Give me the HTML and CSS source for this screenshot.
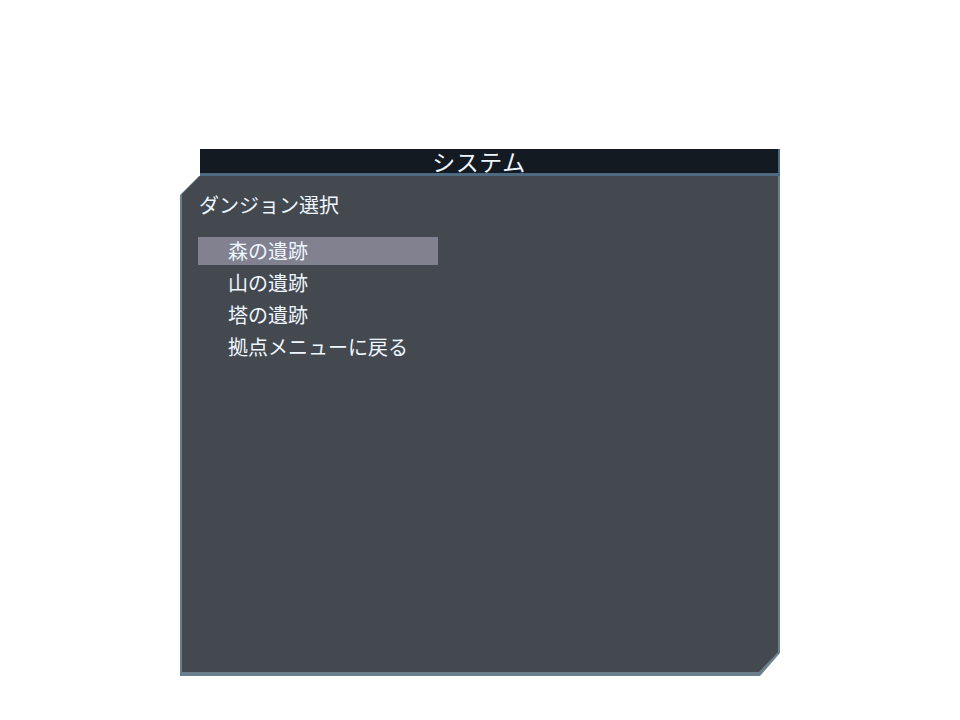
FILE: index.html
```html
<!DOCTYPE html>
<html lang="ja">
<head>
<meta charset="utf-8">
<link rel="stylesheet" href="styles.css">
</head>
<body>
<div class="window">
  <div class="titlebar"><span class="title">システム</span></div>
  <div class="panel-frame">
    <div class="panel">
      <div class="heading">ダンジョン選択</div>
      <ul class="menu">
        <li class="item selected">森の遺跡</li>
        <li class="item">山の遺跡</li>
        <li class="item">塔の遺跡</li>
        <li class="item">拠点メニューに戻る</li>
      </ul>
    </div>
  </div>
</div>
</body>
</html>
```

FILE: styles.css
```css
html, body {
  margin: 0;
  padding: 0;
  background: #ffffff;
  width: 960px;
  height: 720px;
  overflow: hidden;
}
body {
  font-family: "Noto Sans CJK JP", "Noto Sans", sans-serif;
  color: #eef6ff;
}
.window {
  margin: 149px 0 0 180px;
  width: 600px;
}
.titlebar {
  margin-left: 20px;
  height: 24px;
  background: #141a22;
  border-right: 2px solid #4d6a80;
  border-bottom: 3px solid #4d6a80;
  padding-right: 20px;
  display: flex;
  justify-content: center;
  align-items: center;
}
.title {
  font-size: 23px;
  line-height: 24px;
  letter-spacing: 0.5px;
}
.panel-frame {
  height: 498px;
  background: #6b7f8e;
  clip-path: polygon(19px 0, 100% 0, 100% 477px, 580px 100%, 0 100%, 0 19px);
  padding: 0 2px 2px 2px;
}
.panel {
  height: 496px;
  background: #444950;
  clip-path: polygon(18px 0, 100% 0, 100% 476px, 577px 100%, 0 100%, 0 18px);
  padding: 14px 0 0 16px;
  box-sizing: border-box;
}
.heading {
  font-size: 20px;
  line-height: 30px;
  padding-left: 1px;
}
.menu {
  list-style: none;
  margin: 17px 0 0 0;
  padding: 0;
}
.item {
  width: 240px;
  height: 28px;
  line-height: 28px;
  font-size: 20px;
  padding-left: 30px;
  box-sizing: border-box;
  margin-bottom: 4px;
}
.item.selected {
  background: #81818f;
}
```
